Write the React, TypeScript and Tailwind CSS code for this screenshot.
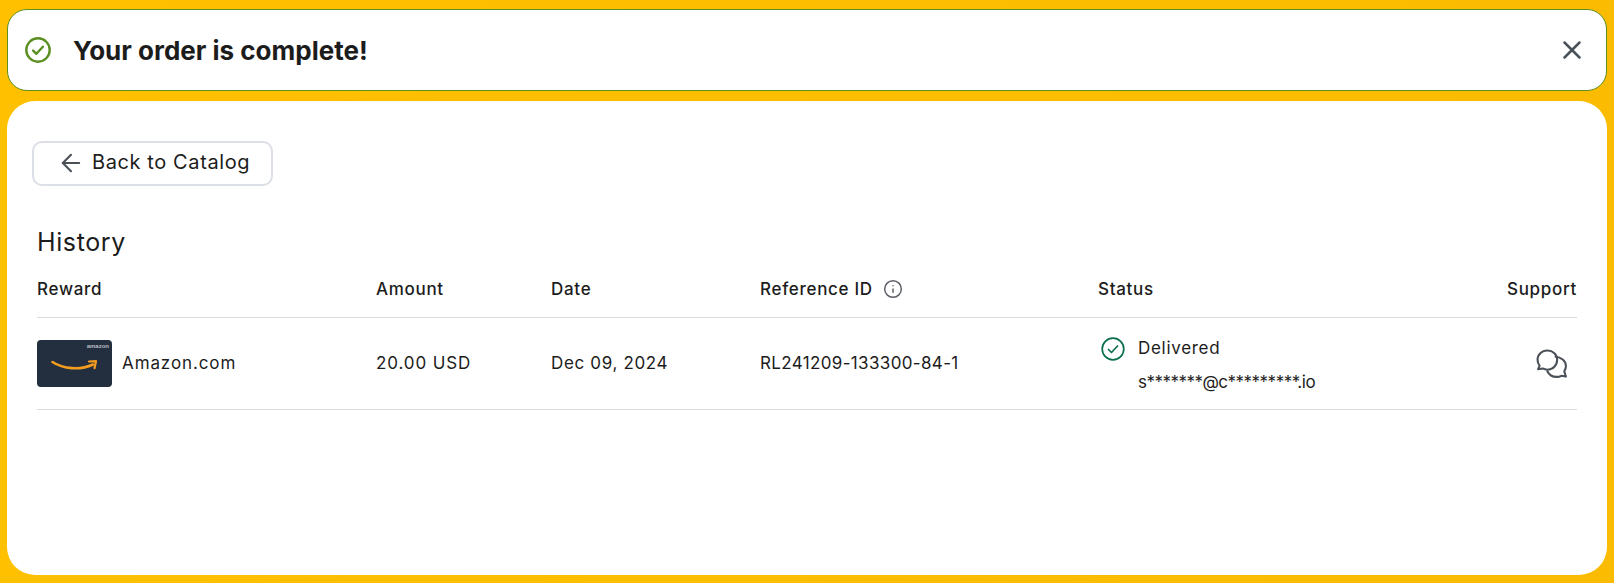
import { ArrowLeft, Info, X } from 'lucide-react';

const FONT = "font-['Inter','Noto_Sans',sans-serif]";

function CheckCircle({ color, size, weight }: { color: string; size: number; weight: number }) {
  return (
    <svg width={size} height={size} viewBox="0 0 24 24" fill="none" stroke={color} strokeWidth={weight} strokeLinecap="round" strokeLinejoin="round">
      <circle cx="12" cy="12" r="10.800" />
      <path d="M7.500 12.500l3 3 6-6.500" />
    </svg>
  );
}

function AmazonCard() {
  return (
    <div className="relative h-[47px] w-[75px] shrink-0 rounded-[4px] bg-[#232f3e]">
      <span className="absolute right-[3px] top-[2px] font-['Liberation_Sans',sans-serif] text-[6px] font-bold leading-[8px] text-[#b9bdc3]">amazon</span>
      <svg className="absolute left-[14px] top-[20px]" width="48" height="12" viewBox="0 0 48 12" fill="none">
        <path d="M1.500 2C12 9 29 10.500 42 4.500" stroke="#f39c1f" strokeWidth="2.600" strokeLinecap="round" />
        <path d="M38 1.500l7-.3-1.500 7" stroke="#f39c1f" strokeWidth="2.200" strokeLinecap="round" strokeLinejoin="round" />
      </svg>
    </div>
  );
}

function ChatIcon() {
  return (
    <svg width="32" height="30" viewBox="0 0 31 29" fill="none" stroke="#4b5158" strokeWidth="2" strokeLinecap="round" strokeLinejoin="round">
      <path d="M11 1.500C5.500 1.500 1.500 5.500 1.500 10.500c0 2.200.8 4.200 2 5.800L2 19.500l4.500-.7c1.300.7 2.900 1.200 4.500 1.200 5.500 0 9.500-4.200 9.500-9.500S16.500 1.500 11 1.500z" />
      <path d="M19 7.500c5 .3 10 3.800 10 9 0 2-.6 3.700-1.600 5.200l1.600 5-4.500-.8c-1.300.8-2.900 1.100-4.500 1.100-4 0-7.500-2.300-9-5.500" />
    </svg>
  );
}

export default function App() {
  return (
    <div className={`${FONT} h-[583px] w-[1614px] overflow-hidden bg-gradient-to-r from-[#ffc000] to-[#fbbb00] px-[7px] pb-[8px] pt-[9px] text-[#1c1c1c]`}>
      <div className="flex h-[82px] items-center justify-between rounded-[20px] border border-[#5b8f22] bg-white pl-[17px] pr-[19px]">
        <div className="flex items-center">
          <CheckCircle color="#5b8f22" size={26} weight={2.200} />
          <h2 className="ml-[22px] text-[26px] font-bold">Your order is complete!</h2>
        </div>
        <X size={30} strokeWidth={2} className="text-[#4b5158]" />
      </div>

      <div className="mt-[10px] h-[474px] rounded-[28px] bg-white px-[30px] pt-[40px]">
        <button className="ml-[-5px] flex h-[45px] w-[241px] items-center rounded-[10px] border-2 border-[#dcdfe6] pb-[4px] pl-[23px] text-[20px] tracking-[0.6px]">
          <ArrowLeft size={28} strokeWidth={1.800} className="mr-[7px] mt-[3px] text-[#4b5158]" />
          Back to Catalog
        </button>

        <h3 className="mt-[41px] text-[25px] leading-[30px] tracking-[0.6px]">History</h3>

        <div className="mt-[20px] grid grid-cols-[339px_175px_209px_338px_1fr_auto] border-b border-[#dcdcdc] pb-[16px] text-[17px] font-medium leading-[24px] tracking-[0.7px]">
          <div>Reward</div>
          <div>Amount</div>
          <div>Date</div>
          <div className="flex items-center">
            Reference ID
            <Info size={20} strokeWidth={1.800} className="ml-[10px] text-[#5d6167]" />
          </div>
          <div>Status</div>
          <div>Support</div>
        </div>

        <div className="grid h-[92px] grid-cols-[339px_175px_209px_338px_1fr_auto] items-center border-b border-[#dcdcdc] text-[17px]">
          <div className="flex items-center">
            <AmazonCard />
            <span className="ml-[10px] tracking-[0.9px]">Amazon.com</span>
          </div>
          <div className="tracking-[0.9px]">20.00 USD</div>
          <div className="tracking-[0.65px]">Dec 09, 2024</div>
          <div className="tracking-[0.35px]">RL241209-133300-84-1</div>
          <div className="pt-[3px]">
            <div className="flex items-center pl-[3px]">
              <CheckCircle color="#0b6e4f" size={24} weight={1.700} />
              <span className="ml-[13px] tracking-[0.7px]">Delivered</span>
            </div>
            <div className="ml-[40px] mt-[9px] leading-[24px] tracking-[-0.5px]">s*******@c*********.io</div>
          </div>
          <div className="pr-[9px]">
            <ChatIcon />
          </div>
        </div>
      </div>
    </div>
  );
}
